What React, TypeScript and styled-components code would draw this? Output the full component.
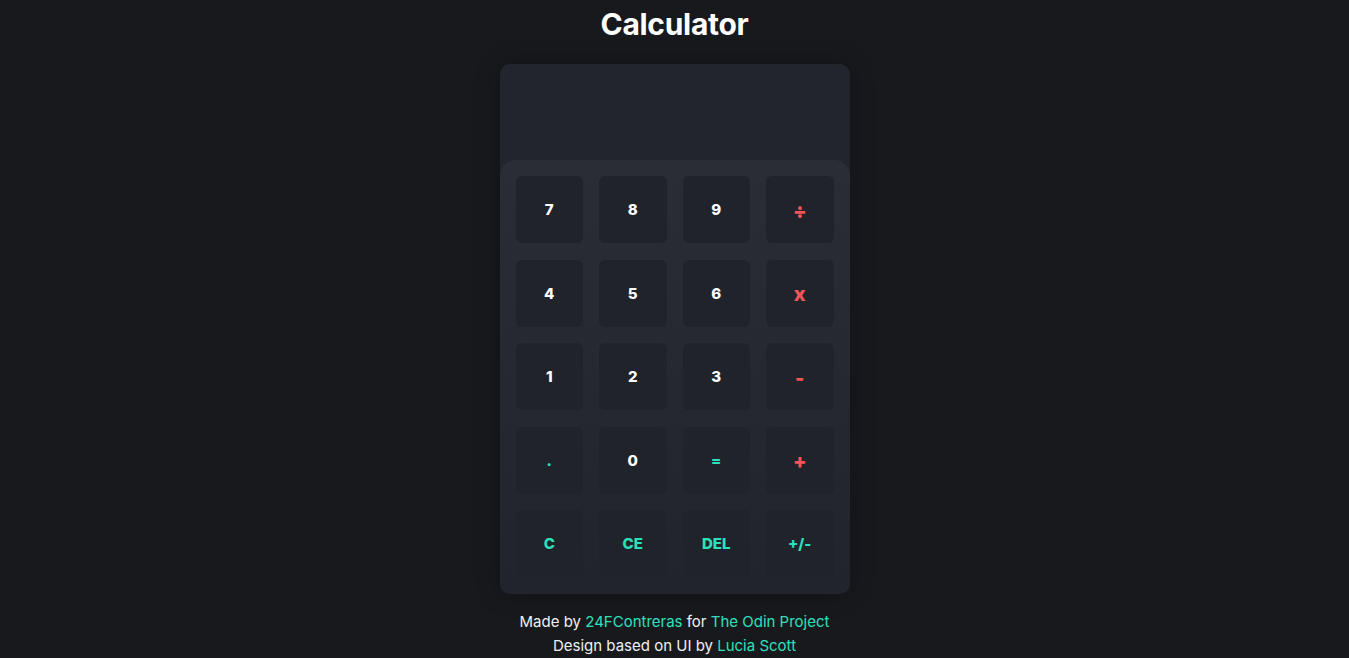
import styled, { createGlobalStyle } from 'styled-components';

const GlobalStyle = createGlobalStyle`
  body {
    margin: 0;
    background-color: #18191d;
    font-family: Inter, "Noto Sans", sans-serif;
    color: #ffffff;
  }
`;

type Kind = 'num' | 'op' | 'fn';

const keys: { label: string; kind: Kind }[] = [
  { label: '7', kind: 'num' },
  { label: '8', kind: 'num' },
  { label: '9', kind: 'num' },
  { label: '÷', kind: 'op' },
  { label: '4', kind: 'num' },
  { label: '5', kind: 'num' },
  { label: '6', kind: 'num' },
  { label: 'x', kind: 'op' },
  { label: '1', kind: 'num' },
  { label: '2', kind: 'num' },
  { label: '3', kind: 'num' },
  { label: '-', kind: 'op' },
  { label: '.', kind: 'fn' },
  { label: '0', kind: 'num' },
  { label: '=', kind: 'fn' },
  { label: '+', kind: 'op' },
  { label: 'C', kind: 'fn' },
  { label: 'CE', kind: 'fn' },
  { label: 'DEL', kind: 'fn' },
  { label: '+/-', kind: 'fn' },
];

export default function App(): JSX.Element {
  return (
    <Page>
      <GlobalStyle />
      <Title>Calculator</Title>
      <Calculator>
        <Display />
        <Keypad>
          {keys.map((k) => (
            <Key key={k.label} $kind={k.kind}>
              {k.label}
            </Key>
          ))}
        </Keypad>
      </Calculator>
      <Footer>
        <p>
          Made by <a>24FContreras</a> for <a>The Odin Project</a>
        </p>
        <p>
          Design based on UI by <a>Lucia Scott</a>
        </p>
      </Footer>
    </Page>
  );
}

const Page = styled.div`
  display: flex;
  flex-direction: column;
  align-items: center;
  min-height: 658px;
`;

const Title = styled.h1`
  margin: 4px 0 20px;
  font-size: 30px;
  line-height: 40px;
  font-weight: 700;
  letter-spacing: -0.3px;
`;

const Calculator = styled.div`
  width: 350px;
  border-radius: 10px;
  background-color: #22252e;
  box-shadow: 0 0 24px rgba(0, 0, 0, 0.25);
  overflow: hidden;
`;

const Display = styled.div`
  height: 96px;
`;

const Keypad = styled.div`
  display: grid;
  grid-template-columns: repeat(4, 1fr);
  grid-auto-rows: 67px;
  column-gap: 16px;
  row-gap: 16.5px;
  padding: 16px 16px 17px;
  border-radius: 16px 16px 10px 10px;
  background: linear-gradient(180deg, #2a2d36 0%, #22242d 100%);
`;

const Key = styled.button<{ $kind: Kind }>`
  border: none;
  border-radius: 6px;
  background-color: #21232b;
  font-family: inherit;
  font-weight: 800;
  font-size: ${(p) => (p.$kind === 'op' ? '20px' : '15px')};
  color: ${(p) => (p.$kind === 'num' ? '#ffffff' : p.$kind === 'op' ? '#f4545a' : '#2de0bd')};
  display: flex;
  align-items: center;
  justify-content: center;
  padding: ${(p) => (p.$kind === 'op' ? '2px 0 0' : '0')};
`;

const Footer = styled.div`
  margin-top: 16px;
  text-align: center;
  font-size: 15px;
  line-height: 24px;
  color: #f0f0f0;

  p {
    margin: 0;
  }

  a {
    color: #2de0bd;
  }
`;
